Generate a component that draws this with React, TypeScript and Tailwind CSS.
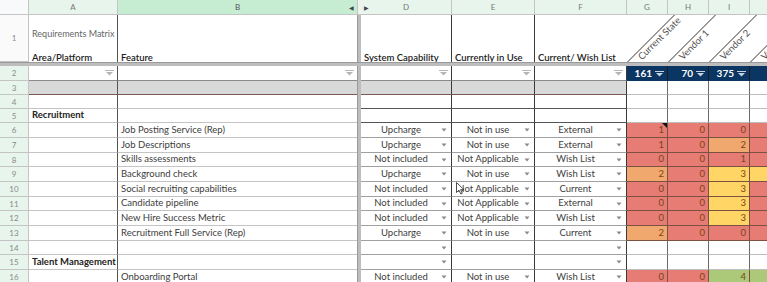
import React from 'react';

type Color = 'r' | 'o' | 'y' | 'g';

const rows: {
  n: number;
  feature: string;
  cap: string;
  use: string;
  wish: string;
  g: [number, Color];
  h: [number, Color];
  i: [number, Color];
  j: Color;
}[] = [
  { n: 6, feature: 'Job Posting Service (Rep)', cap: 'Upcharge', use: 'Not in use', wish: 'External', g: [1, 'r'], h: [0, 'r'], i: [0, 'r'], j: 'r' },
  { n: 7, feature: 'Job Descriptions', cap: 'Upcharge', use: 'Not in use', wish: 'External', g: [1, 'r'], h: [0, 'r'], i: [2, 'o'], j: 'r' },
  { n: 8, feature: 'Skills assessments', cap: 'Not included', use: 'Not Applicable', wish: 'Wish List', g: [0, 'r'], h: [0, 'r'], i: [1, 'r'], j: 'r' },
  { n: 9, feature: 'Background check', cap: 'Upcharge', use: 'Not in use', wish: 'Wish List', g: [2, 'o'], h: [0, 'r'], i: [3, 'y'], j: 'y' },
  { n: 10, feature: 'Social recruiting capabilities', cap: 'Not included', use: 'Not Applicable', wish: 'Current', g: [0, 'r'], h: [0, 'r'], i: [3, 'y'], j: 'r' },
  { n: 11, feature: 'Candidate pipeline', cap: 'Not included', use: 'Not Applicable', wish: 'External', g: [0, 'r'], h: [0, 'r'], i: [3, 'y'], j: 'r' },
  { n: 12, feature: 'New Hire Success Metric', cap: 'Not included', use: 'Not Applicable', wish: 'Wish List', g: [0, 'r'], h: [0, 'r'], i: [3, 'y'], j: 'r' },
  { n: 13, feature: 'Recruitment Full Service (Rep)', cap: 'Upcharge', use: 'Not in use', wish: 'Current', g: [2, 'o'], h: [0, 'r'], i: [0, 'r'], j: 'r' },
];

const bg: Record<Color, string> = {
  r: 'bg-[#e67c73]',
  o: 'bg-[#f0a86f]',
  y: 'bg-[#ffd666]',
  g: 'bg-[#abc978]',
};

const Caret = () => (
  <svg width="6" height="4" viewBox="0 0 6 4" className="shrink-0">
    <path d="M0.5 0.5 L5.5 0.5 L3 3.5 Z" fill="#8a8a8a" />
  </svg>
);

const Filter = ({ light }: { light?: boolean }) => (
  <svg width="9" height="6" viewBox="0 0 9 6" className="shrink-0">
    <rect x="0" y="0" width="9" height="1" fill={light ? '#c8d3e0' : '#b5b5b5'} />
    <path d="M1 2 L8 2 L4.5 5.5 Z" fill={light ? '#c8d3e0' : '#b5b5b5'} />
  </svg>
);

const RowNum = ({ n, white }: { n: number; white?: boolean }) => (
  <div className={`flex items-center justify-center border-r border-b border-[#c4c4c4] text-[8px] text-[#8a8a8a] ${white ? 'bg-[#fafafa]' : 'bg-[#e8f5ec]'}`}>
    {n}
  </div>
);

const Freeze = () => <div className="bg-[#bdbdbd] border-l border-[#9a9a9a]" />;

const Drop = ({ text }: { text?: string }) => (
  <div className="flex items-center pr-[4px] border-b border-[#a0a0a0] border-r border-r-[#3a3a3a]">
    <span className="flex-1 text-center whitespace-nowrap overflow-hidden">{text}</span>
    <Caret />
  </div>
);

const Plain = ({ className = '' }: { className?: string }) => (
  <div className={`border-r border-b ${className}`} />
);

const Num = ({ v, note }: { v: [number, Color]; note?: boolean }) => (
  <div className={`relative flex items-center justify-end pr-[3px] border-r border-b border-[#7d5142] text-[#7a4418] ${bg[v[1]]}`}>
    {v[0]}
    {note && (
      <svg width="5" height="5" className="absolute right-0 top-0">
        <path d="M0 0 L5 0 L5 5 Z" fill="#111" />
      </svg>
    )}
  </div>
);

const WhiteGJ = () => (
  <>
    <Plain className="border-r-[#6a6a6a] border-b-[#bdbdbd]" />
    <Plain className="border-r-[#6a6a6a] border-b-[#bdbdbd]" />
    <Plain className="border-r-[#6a6a6a] border-b-[#bdbdbd]" />
    <Plain className="border-r-[#6a6a6a] border-b-[#bdbdbd]" />
  </>
);

const colHeads = ['D', 'E', 'F', 'G', 'H', 'I', ''];

export default function App() {
  return (
    <div className="relative w-[767px] h-[282px] overflow-hidden bg-white text-[9.5px] text-[#3c3c3c]" style={{ fontFamily: 'Lato, "Liberation Sans", sans-serif' }}>
      <div className="grid grid-cols-[29px_89px_239px_4px_91px_83px_92px_41px_41px_41px_18px] grid-rows-[15px_47px_4px_15px_14px_14px_14px_15px_15px_14px_15px_15px_14px_15px_15px_14px_15px_15px] w-[768px]">
        {/* column header */}
        <div className="bg-[#f8f9fa] border-r border-b border-[#c4c4c4]" />
        <div className="flex items-center justify-center bg-[#e8f5ec] border-r border-b border-[#c4c4c4] text-[8px] text-[#777]">A</div>
        <div className="relative flex items-center justify-center bg-[#c6ecd2] border-b border-[#c4c4c4] text-[8px] text-[#555]">
          B
          <span className="absolute right-[3px] top-[3px] text-[6px] text-[#444]">◀</span>
        </div>
        <div className="relative bg-[#f1f1f1] border-b border-[#c4c4c4] border-l border-l-[#c4c4c4]" />
        {colHeads.map((c, k) => (
          <div key={k} className="relative flex items-center justify-center bg-[#e8f5ec] border-r border-b border-[#c4c4c4] text-[8px] text-[#777]">
            {k === 0 && <span className="absolute left-[3px] top-[3px] text-[6px] text-[#444]">▶</span>}
            {c}
          </div>
        ))}

        {/* row 1 */}
        <RowNum n={1} white />
        <div className="flex flex-col justify-end px-[3px] border-r border-[#555] whitespace-nowrap overflow-hidden leading-[9px]">
          <span className="text-[#666] mb-[15px] text-[9px]">Requirements Matrix</span>
          <span className="font-semibold text-[#222]">Area/Platform</span>
        </div>
        <div className="flex items-end px-[3px] leading-[9px] font-semibold text-[#222]">Feature</div>
        <Freeze />
        <div className="flex items-end px-[3px] leading-[9px] border-r border-[#3a3a3a] font-semibold text-[#222] whitespace-nowrap">System Capability</div>
        <div className="flex items-end px-[3px] leading-[9px] border-r border-[#3a3a3a] font-semibold text-[#222] whitespace-nowrap">Currently in Use</div>
        <div className="flex items-end px-[3px] leading-[9px] font-semibold text-[#222] whitespace-nowrap">Current/ Wish List</div>
        <div className="col-span-4 relative overflow-hidden">
          <svg width="141" height="47" className="absolute left-0 top-0">
            {[0, 41, 82, 123].map((x) => (
              <line key={x} x1={x + 0.5} y1={47} x2={x + 47.5} y2={0} stroke="#333" strokeWidth="1" />
            ))}
          </svg>
          {[
            ['Current State', 16],
            ['Vendor 1', 57],
            ['Vendor 2', 98],
            ['Vendor 3', 139],
          ].map(([t, x]) => (
            <div
              key={t as string}
              className="absolute bottom-[1px] whitespace-nowrap text-[9.5px] text-[#555] origin-bottom-left -rotate-45 leading-none"
              style={{ left: x as number }}
            >
              {t}
            </div>
          ))}
        </div>

        {/* freeze row */}
        <div className="col-span-11 bg-[#bdbdbd] border-t border-[#9a9a9a]" />

        {/* row 2 */}
        <RowNum n={2} />
        <div className="flex items-center justify-end pr-[3px] border-r border-r-[#555] border-b border-b-[#8a8a8a]"><Filter /></div>
        <div className="flex items-center justify-end pr-[3px] border-b border-[#8a8a8a]"><Filter /></div>
        <Freeze />
        <div className="flex items-center justify-end pr-[3px] border-r border-r-[#3a3a3a] border-b border-b-[#8a8a8a]"><Filter /></div>
        <div className="flex items-center justify-end pr-[3px] border-r border-r-[#3a3a3a] border-b border-b-[#8a8a8a]"><Filter /></div>
        <div className="flex items-center justify-end pr-[3px] border-r border-r-[#3a3a3a] border-b border-b-[#8a8a8a]"><Filter /></div>
        {['161', '70', '375', ''].map((v, k) => (
          <div key={k} className="flex items-center justify-end gap-[3px] pr-[3px] bg-[#0b3563] border-r border-[#1c1c1c] text-white font-bold text-[10px]">
            {v}
            {v && <Filter light />}
          </div>
        ))}

        {/* row 3 */}
        <RowNum n={3} />
        <div className="bg-[#d9d9d9] border-r border-r-[#555] border-b border-b-[#7a5a50]" />
        <div className="bg-[#d9d9d9] border-b border-b-[#7a5a50]" />
        <Freeze />
        <div className="bg-[#d9d9d9] border-r border-r-[#3a3a3a] border-b border-b-[#7a5a50]" />
        <div className="bg-[#d9d9d9] border-r border-r-[#3a3a3a] border-b border-b-[#7a5a50]" />
        <div className="bg-[#d9d9d9] border-r border-r-[#3a3a3a] border-b border-b-[#7a5a50]" />
        <WhiteGJ />

        {/* row 4 */}
        <RowNum n={4} />
        <Plain className="border-r-[#555] border-b-[#c4c4c4]" />
        <div className="border-b border-[#c4c4c4]" />
        <Freeze />
        <Plain className="border-r-[#3a3a3a] border-b-[#555]" />
        <Plain className="border-r-[#3a3a3a] border-b-[#555]" />
        <Plain className="border-r-[#3a3a3a] border-b-[#555]" />
        <WhiteGJ />

        {/* row 5 */}
        <RowNum n={5} />
        <div className="flex items-center px-[3px] font-bold text-[#222] border-r border-r-[#555] border-b border-b-[#c4c4c4]">Recruitment</div>
        <div className="border-b border-[#c4c4c4]" />
        <Freeze />
        <Plain className="border-r-[#3a3a3a] border-b-[#555]" />
        <Plain className="border-r-[#3a3a3a] border-b-[#555]" />
        <Plain className="border-r-[#3a3a3a] border-b-[#555]" />
        <WhiteGJ />

        {rows.map((r) => (
          <React.Fragment key={r.n}>
            <RowNum n={r.n} />
            <Plain className="border-r-[#555] border-b-[#c4c4c4]" />
            <div className="flex items-center px-[3px] border-b border-[#c4c4c4] whitespace-nowrap">{r.feature}</div>
            <Freeze />
            <Drop text={r.cap} />
            <Drop text={r.use} />
            <Drop text={r.wish} />
            <Num v={r.g} note={r.n === 6} />
            <Num v={r.h} />
            <Num v={r.i} />
            <div className={`border-r border-b border-[#7d5142] ${bg[r.j]}`} />
          </React.Fragment>
        ))}

        {/* row 14 */}
        <RowNum n={14} />
        <Plain className="border-r-[#555] border-b-[#c4c4c4]" />
        <div className="border-b border-[#c4c4c4]" />
        <Freeze />
        <Drop />
        <Plain className="border-r-[#3a3a3a] border-b-[#a0a0a0]" />
        <Drop />
        <WhiteGJ />

        {/* row 15 */}
        <RowNum n={15} />
        <div className="flex items-center px-[3px] font-bold text-[#222] whitespace-nowrap border-r border-r-[#555] border-b border-b-[#c4c4c4]">Talent Management</div>
        <div className="border-b border-[#c4c4c4]" />
        <Freeze />
        <Drop />
        <Plain className="border-r-[#3a3a3a] border-b-[#a0a0a0]" />
        <Drop />
        <WhiteGJ />

        {/* row 16 */}
        <RowNum n={16} />
        <Plain className="border-r-[#555] border-b-[#c4c4c4]" />
        <div className="flex items-center px-[3px] border-b border-[#c4c4c4] whitespace-nowrap">Onboarding Portal</div>
        <Freeze />
        <Drop text="Not included" />
        <Drop text="Not in use" />
        <Drop text="Wish List" />
        <Num v={[0, 'r']} />
        <Num v={[0, 'r']} />
        <Num v={[4, 'g']} />
        <div className={`border-r border-b border-[#7d5142] ${bg.g}`} />
      </div>

      {/* mouse cursor */}
      <svg width="9" height="13" viewBox="0 0 9 13" className="absolute left-[456px] top-[182px]">
        <path d="M0.5 0.5 L0.5 10.5 L3 8.2 L4.8 12 L6.3 11.3 L4.6 7.7 L8 7.7 Z" fill="#fff" stroke="#222" strokeWidth="0.8" />
      </svg>
    </div>
  );
}
